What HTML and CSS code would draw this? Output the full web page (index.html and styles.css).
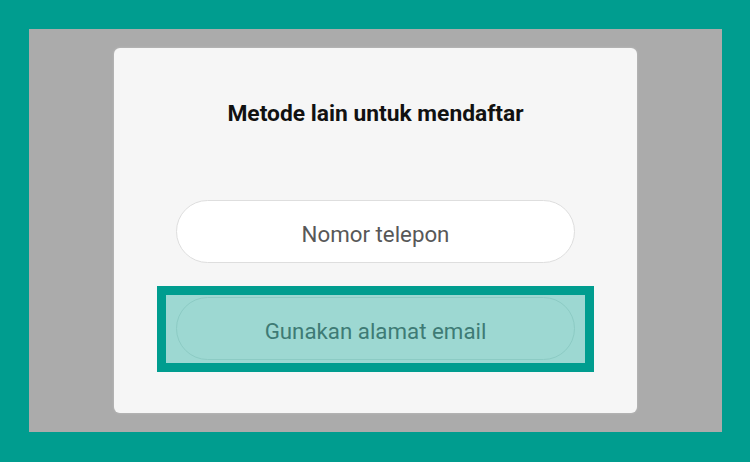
FILE: index.html
```html
<!DOCTYPE html>
<html lang="id">
<head>
<meta charset="utf-8">
<title>Metode lain untuk mendaftar</title>
<link rel="stylesheet" href="styles.css">
</head>
<body>
  <div class="page">
    <div class="frame">
      <div class="card">
        <h1 class="title">Metode lain untuk mendaftar</h1>
        <div class="btn btn-phone">Nomor telepon</div>
        <div class="highlight">
          <div class="btn btn-email">Gunakan alamat email</div>
        </div>
      </div>
    </div>
  </div>
</body>
</html>
```
FILE: styles.css
```css
* { box-sizing: border-box; }
html, body {
  margin: 0;
  padding: 0;
  background: #009d8f;
}
body {
  font-family: Roboto, "Liberation Sans", Arial, sans-serif;
}
.page {
  width: 750px;
  height: 462px;
  background: #009d8f;
  border-style: solid;
  border-color: #009d8f;
  border-width: 29px 28px 30px 29px;
}
.frame {
  background: #ababab;
  width: 100%;
  height: 100%;
  display: flex;
  align-items: center;
  justify-content: center;
}
.card {
  width: 523px;
  height: 365px;
  background: #f6f6f6;
  border-radius: 6px;
  padding-top: 52px;
  display: flex;
  flex-direction: column;
  align-items: center;
  box-shadow: 0 0 3px rgba(255,255,255,0.25);
}
.title {
  margin: 0;
  font-size: 22.8px;
  line-height: 28px;
  font-weight: 700;
  color: #111;
}
.btn {
  width: 399px;
  height: 63px;
  border-radius: 32px;
  display: flex;
  align-items: center;
  justify-content: center;
  padding-top: 4px;
  font-size: 22.3px;
}
.btn-phone {
  margin-top: 72px;
  background: #fff;
  border: 1px solid #dedede;
  color: #585858;
}
.highlight {
  margin-top: 23px;
  border: 9px solid #009d8f;
  background: #9dd8d2;
  padding: 2px 10px 3px 10px;
}
.btn-email {
  background: #9dd8d2;
  border: 1px solid #8ccbc4;
  color: #3e7b75;
}
```
